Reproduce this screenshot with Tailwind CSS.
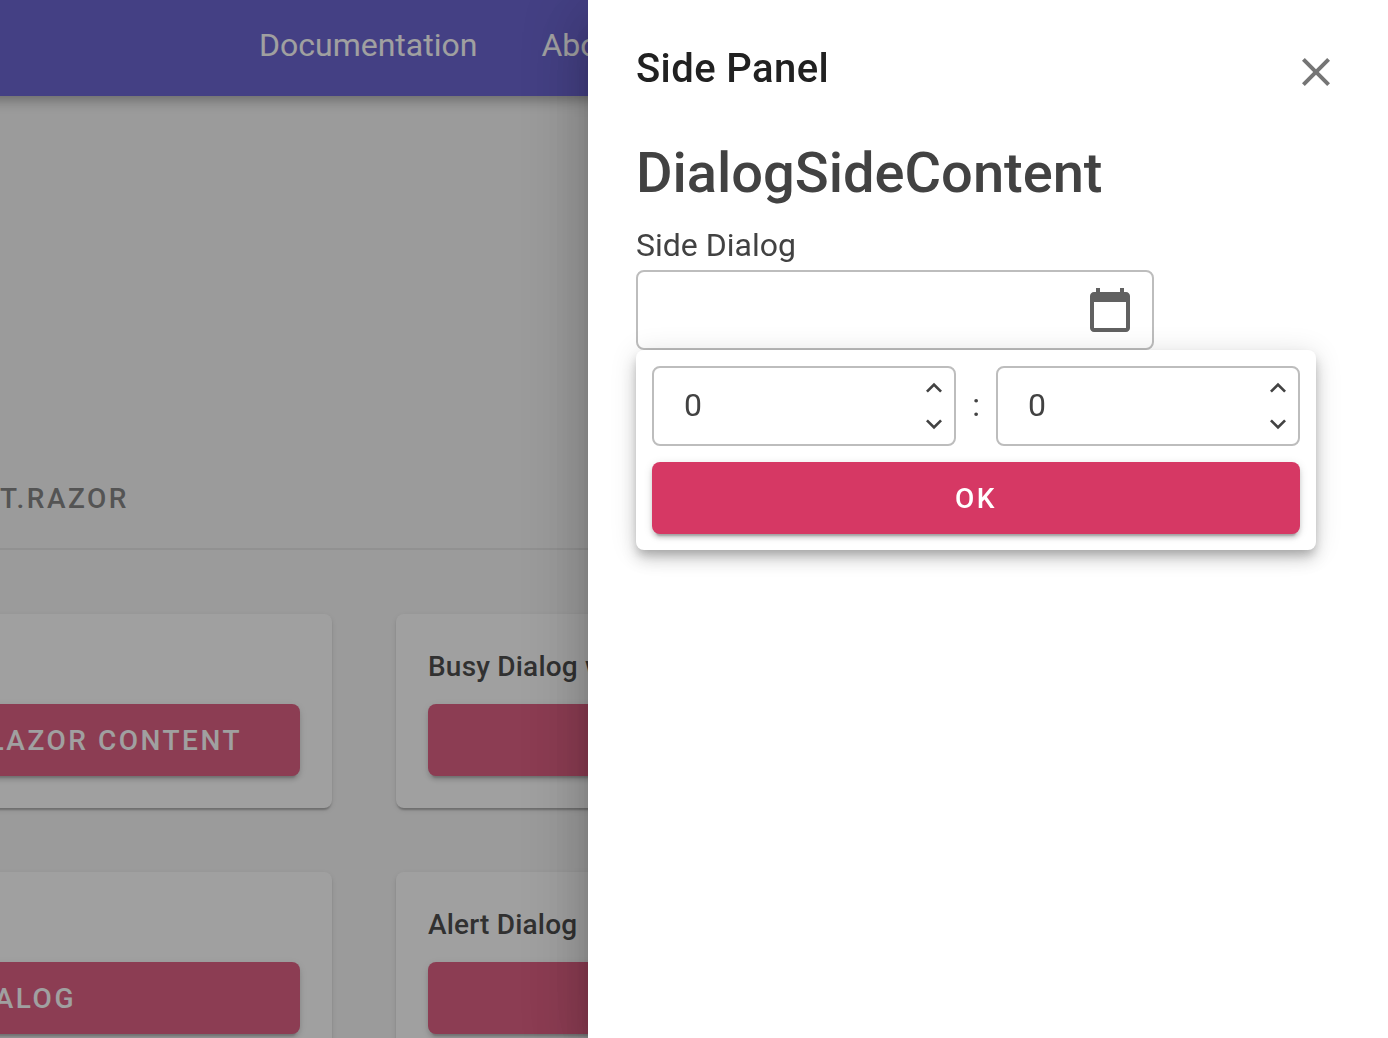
<!DOCTYPE html>
<html lang="en">
<head>
  <meta charset="UTF-8">
  <meta name="viewport" content="width=device-width, initial-scale=1.0">
  <title>Dialogs</title>
  <script src="https://cdn.jsdelivr.net/npm/@tailwindcss/browser@4"></script>
</head>
<body class="h-screen overflow-hidden bg-[#f5f5f5] font-[Roboto,sans-serif] text-[32px] leading-12 text-[#424242]">
  <header class="relative -mx-8 h-24 bg-[#473fc6] shadow-[0_4px_8px_-2px_rgba(0,0,0,0.2),0_8px_10px_0_rgba(0,0,0,0.14),0_2px_20px_0_rgba(0,0,0,0.12)]">
    <nav class="flex h-full items-center gap-16 pl-[291px] pb-1.5 text-white">
      <a href="#docs">Documentation</a>
      <a href="#about">About</a>
    </nav>
  </header>

  <main class="overflow-hidden pt-[354px]">
    <div class="flex border-b-2 border-[#e0e0e0] pb-0.5">
      <button class="flex h-24 w-[129px] items-center justify-end pt-0.5 text-[28px] font-medium text-[#666666] tracking-[0.09em]">CONTENT.RAZOR</button>
    </div>

    <div class="-ml-24 grid grid-cols-[428px_1fr] gap-16 pt-16">
      <section class="rounded-lg bg-white p-8 shadow-[0_4px_2px_-2px_rgba(0,0,0,0.2),0_2px_2px_0_rgba(0,0,0,0.14),0_2px_6px_0_rgba(0,0,0,0.12)]">
        <div class="h-[42px]"></div>
        <button class="mt-4 flex h-[72px] w-full items-center justify-end rounded-lg bg-[#d63864] pt-0.5 pr-[58px] text-[28px] font-medium whitespace-nowrap text-white tracking-[0.09em] shadow-[0_6px_2px_-4px_rgba(0,0,0,0.2),0_4px_4px_0_rgba(0,0,0,0.14),0_2px_10px_0_rgba(0,0,0,0.12)]">BLAZOR CONTENT</button>
      </section>
      <section class="rounded-lg bg-white p-8 shadow-[0_4px_2px_-2px_rgba(0,0,0,0.2),0_2px_2px_0_rgba(0,0,0,0.14),0_2px_6px_0_rgba(0,0,0,0.12)]">
        <h3 class="text-[28px] leading-[42px] font-medium text-[#212121] tracking-[0.007em]">Busy Dialog with</h3>
        <button aria-label="Busy dialog" class="mt-4 block h-[72px] w-full rounded-lg bg-[#d63864] shadow-[0_6px_2px_-4px_rgba(0,0,0,0.2),0_4px_4px_0_rgba(0,0,0,0.14),0_2px_10px_0_rgba(0,0,0,0.12)]"></button>
      </section>
      <section class="rounded-lg bg-white p-8 shadow-[0_4px_2px_-2px_rgba(0,0,0,0.2),0_2px_2px_0_rgba(0,0,0,0.14),0_2px_6px_0_rgba(0,0,0,0.12)]">
        <div class="h-[42px]"></div>
        <button class="mt-4 flex h-[72px] w-full items-center justify-end rounded-lg bg-[#d63864] pt-0.5 pr-56 text-[28px] font-medium whitespace-nowrap text-white tracking-[0.09em] shadow-[0_6px_2px_-4px_rgba(0,0,0,0.2),0_4px_4px_0_rgba(0,0,0,0.14),0_2px_10px_0_rgba(0,0,0,0.12)]">DIALOG</button>
      </section>
      <section class="rounded-lg bg-white p-8 shadow-[0_4px_2px_-2px_rgba(0,0,0,0.2),0_2px_2px_0_rgba(0,0,0,0.14),0_2px_6px_0_rgba(0,0,0,0.12)]">
        <h3 class="text-[28px] leading-[42px] font-medium text-[#212121] tracking-[0.007em]">Alert Dialog</h3>
        <button aria-label="Alert dialog" class="mt-4 block h-[72px] w-full rounded-lg bg-[#d63864] shadow-[0_6px_2px_-4px_rgba(0,0,0,0.2),0_4px_4px_0_rgba(0,0,0,0.14),0_2px_10px_0_rgba(0,0,0,0.12)]"></button>
      </section>
    </div>
  </main>

  <!-- scrim -->
  <div class="fixed inset-0 bg-[#424242]/50"></div>

  <aside role="dialog" aria-labelledby="panel-title" class="fixed inset-y-0 right-0 w-[800px] max-w-full bg-white p-12 shadow-[0_16px_20px_-10px_rgba(0,0,0,0.2),0_32px_48px_4px_rgba(0,0,0,0.14),0_12px_60px_10px_rgba(0,0,0,0.12)]">
    <div class="flex items-start justify-between">
      <h2 id="panel-title" class="text-[40px] leading-[42px] font-medium text-[#212121] tracking-[0.01em]">Side Panel</h2>
      <button id="close" aria-label="Close" class="text-[#757575]">
        <svg class="size-12" viewBox="0 0 24 24" fill="currentColor"><path d="M19 6.41L17.59 5 12 10.59 6.41 5 5 6.41 10.59 12 5 17.59 6.41 19 12 13.41 17.59 19 19 17.59 13.41 12z"/></svg>
      </button>
    </div>

    <h1 class="mt-11 text-[56px] leading-[66px] font-medium">DialogSideContent</h1>
    <label for="date" class="mt-3.5 block leading-[50px]">Side Dialog</label>

    <div class="relative">
      <div class="flex h-20 w-[518px] items-center rounded-lg border-2 border-[#bdbdbd] pr-[18px]">
        <input id="date" type="text" class="h-full min-w-0 grow pl-[30px] outline-none">
        <button aria-label="Choose date" class="text-[#616161]">
          <svg class="size-12" viewBox="0 0 24 24" fill="currentColor"><path d="M20 3h-1V1h-2v2H7V1H5v2H4c-1.1 0-2 .9-2 2v16c0 1.1.9 2 2 2h16c1.1 0 2-.9 2-2V5c0-1.1-.9-2-2-2zm0 18H4V8h16v13z"/></svg>
        </button>
      </div>

      <!-- time picker -->
      <div class="absolute top-full left-0 w-[680px] rounded-lg bg-white p-4 shadow-[0_6px_10px_-2px_rgba(0,0,0,0.2),0_10px_16px_0_rgba(0,0,0,0.14),0_2px_28px_0_rgba(0,0,0,0.12)]">
        <div class="flex items-center">
          <div class="flex h-20 min-w-0 flex-1 rounded-lg border-2 border-[#bdbdbd] pr-1">
            <input aria-label="Hours" type="text" inputmode="numeric" value="0" class="min-w-0 grow pl-[30px] pb-0.5 outline-none">
            <div class="flex flex-col justify-center gap-1">
              <button data-step="1" aria-label="More hours"><svg class="size-8" viewBox="0 0 24 24" fill="currentColor"><path d="M12 8l-6 6 1.41 1.41L12 10.83l4.59 4.58L18 14z"/></svg></button>
              <button data-step="-1" aria-label="Fewer hours"><svg class="size-8" viewBox="0 0 24 24" fill="currentColor"><path d="M16.59 8.59L12 13.17 7.41 8.59 6 10l6 6 6-6z"/></svg></button>
            </div>
          </div>
          <span class="w-10 pb-0.5 text-center">:</span>
          <div class="flex h-20 min-w-0 flex-1 rounded-lg border-2 border-[#bdbdbd] pr-1">
            <input aria-label="Minutes" type="text" inputmode="numeric" value="0" class="min-w-0 grow pl-[30px] pb-0.5 outline-none">
            <div class="flex flex-col justify-center gap-1">
              <button data-step="1" aria-label="More minutes"><svg class="size-8" viewBox="0 0 24 24" fill="currentColor"><path d="M12 8l-6 6 1.41 1.41L12 10.83l4.59 4.58L18 14z"/></svg></button>
              <button data-step="-1" aria-label="Fewer minutes"><svg class="size-8" viewBox="0 0 24 24" fill="currentColor"><path d="M16.59 8.59L12 13.17 7.41 8.59 6 10l6 6 6-6z"/></svg></button>
            </div>
          </div>
        </div>
        <button class="mt-4 block h-[72px] w-full rounded-lg bg-[#d63864] pt-0.5 text-[28px] font-medium text-white tracking-[0.09em] shadow-[0_6px_2px_-4px_rgba(0,0,0,0.2),0_4px_4px_0_rgba(0,0,0,0.14),0_2px_10px_0_rgba(0,0,0,0.12)]">OK</button>
      </div>
    </div>
  </aside>

  <script>
    document.querySelectorAll('[data-step]').forEach(btn => {
      btn.addEventListener('click', () => {
        var input = btn.parentNode.previousElementSibling
        input.value = Math.max(0, Number(input.value) + Number(btn.dataset.step))
      })
    })

    document.querySelector('#close').onclick = () => {
      document.querySelector('aside').classList.add('hidden')
    }
  </script>
</body>
</html>
